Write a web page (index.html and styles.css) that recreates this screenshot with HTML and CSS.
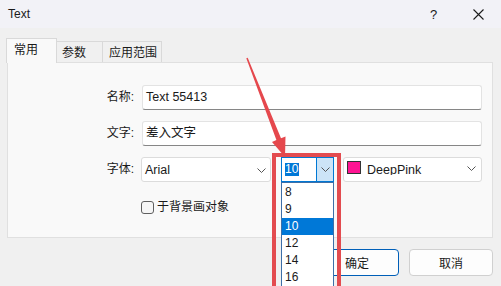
FILE: index.html
```html
<!DOCTYPE html>
<html>
<head>
<meta charset="utf-8">
<title>Text</title>
<link rel="stylesheet" href="styles.css">
</head>
<body>
<div class="window">
  <div class="titlebar">
    <span class="title">Text</span>
    <span class="help">?</span>
    <span class="close"><svg width="11" height="11" viewBox="0 0 11 11"><path d="M0.5 0.5L10.5 10.5M10.5 0.5L0.5 10.5" stroke="#1b1b1b" stroke-width="1.1" fill="none"/></svg></span>
  </div>
  <div class="client">
    <div class="tabs">
      <div class="tab active t1">常用</div>
      <div class="tab t2">参数</div>
      <div class="tab t3">应用范围</div>
    </div>
    <div class="panel">
      <div class="form">
        <div class="lbl">名称:</div>
        <div class="input">Text 55413</div>
        <div class="lbl">文字:</div>
        <div class="input">差入文字</div>
        <div class="lbl">字体:</div>
        <div class="font-row">
          <div class="select font-sel">
            <span class="sel-text">Arial</span>
            <svg class="chev" width="9" height="5" viewBox="0 0 9 5"><path d="M0.5 0.5L4.5 4.5L8.5 0.5" stroke="#555" stroke-width="1" fill="none"/></svg>
          </div>
          <div class="combo">
            <span class="combo-text"><span class="hl">10</span></span>
            <span class="combo-btn"><svg width="9" height="5" viewBox="0 0 9 5"><path d="M0.5 0.5L4.5 4.5L8.5 0.5" stroke="#555" stroke-width="1" fill="none"/></svg></span>
            <ul class="droplist">
              <li>8</li>
              <li>9</li>
              <li class="cur">10</li>
              <li>12</li>
              <li>14</li>
              <li>16</li>
            </ul>
          </div>
          <div class="select color-sel">
            <span class="swatch"></span>
            <span class="color-name">DeepPink</span>
            <svg class="chev" width="9" height="5" viewBox="0 0 9 5"><path d="M0.5 0.5L4.5 4.5L8.5 0.5" stroke="#555" stroke-width="1" fill="none"/></svg>
          </div>
        </div>
        <div></div>
        <label class="check"><span class="box"></span><span class="check-text">于背景画对象</span></label>
      </div>
    </div>
    <div class="buttons">
      <button class="btn default">确定</button>
      <button class="btn">取消</button>
    </div>
  </div>
  <div class="annot-box"></div>
  <svg class="arrow" width="501" height="286" viewBox="0 0 501 286">
    <path d="M246.3 58.3 L247.7 57.7 L281 138.3 L285.5 136.5 L285 157 L272 141.9 L276.4 140.1 Z" fill="#e5484d"/>
  </svg>
</div>
</body>
</html>
```

FILE: styles.css
```css
* { box-sizing: border-box; }
html, body { margin: 0; padding: 0; }
body {
  width: 501px;
  height: 286px;
  overflow: hidden;
  background: #f0f0f0;
  font-family: "Liberation Sans", "Noto Sans CJK SC", sans-serif;
  font-size: 12px;
  color: #1a1a1a;
}
.window {
  position: relative;
  width: 501px;
  height: 286px;
  overflow: hidden;
  background: #f0f0f0;
}
.titlebar {
  height: 28px;
  background: #f2f2f7;
  display: flex;
  align-items: center;
  padding-left: 8px;
}
.title { font-size: 12px; flex: 1; }
.help { font-size: 13px; width: 8px; margin-right: 35px; }
.close { width: 11px; height: 11px; margin-right: 17px; display: flex; }
.client { padding: 0 8px 0 7px; }
.tabs {
  display: flex;
  align-items: flex-end;
  height: 24px;
  margin-top: 10px;
  position: relative;
  z-index: 2;
}
.tab {
  height: 21px;
  border: 1px solid #d9d9d9;
  border-bottom: none;
  background: #f0f0f0;
  line-height: 20px;
  padding-top: 1px;
  white-space: nowrap;
  font-size: 12px;
}
.tab.active {
  height: 25px;
  margin-bottom: -1px;
  background: #f9f9f9;
  line-height: 22px;
  padding-top: 0;
  margin-left: -1px;
}
.t1 { width: 51px; padding-left: 7px; }
.t2 { width: 46px; padding-left: 5px; border-left: none; }
.t3 { width: 59px; padding-left: 6px; border-left: none; }
.panel {
  height: 176px;
  background: #f9f9f9;
  border: 1px solid #e0e0e0;
  padding-top: 22px;
}
.form {
  display: grid;
  grid-template-columns: 127px 340px;
  column-gap: 7px;
  row-gap: 11px;
  grid-template-rows: 25px 25px 25px auto;
}
.lbl {
  text-align: right;
  line-height: 25px;
  padding-right: 1px;
}
.input {
  height: 25px;
  background: #fff;
  border: 1px solid #e3e3e3;
  border-bottom-color: #868686;
  border-radius: 3px;
  padding-left: 3px;
  line-height: 23px;
  font-size: 12.5px;
}
.font-row {
  display: flex;
  height: 25px;
}
.select {
  height: 25px;
  background: #fff;
  border: 1px solid #dcdcdc;
  border-radius: 3px;
  display: flex;
  align-items: center;
}
.font-sel {
  width: 130px;
  margin-left: -1px;
  padding-left: 3px;
  font-size: 12.5px;
}
.sel-text { flex: 1; }
.font-sel .chev { margin-right: 4px; margin-top: 1px; }
.combo {
  position: relative;
  width: 53px;
  height: 25px;
  margin-left: 10px;
  border: 1px solid #0078d4;
  background: #fff;
  display: flex;
}
.combo-text {
  flex: 1;
  padding-left: 3px;
  padding-top: 4px;
}
.hl {
  display: inline-block;
  background: #0078d7;
  color: #fff;
  height: 13px;
  line-height: 13px;
  padding: 0 1px 0 0;
}
.combo-btn {
  width: 17px;
  background: #cce4f7;
  border-left: 1px solid #0078d4;
  display: flex;
  align-items: center;
  justify-content: center;
}
.droplist {
  position: absolute;
  left: -1px;
  top: 24px;
  width: 53px;
  margin: 0;
  padding: 1px 0 0 0;
  list-style: none;
  background: #fff;
  border: 1px solid #3d6fa8;
  z-index: 5;
}
.droplist li {
  height: 17px;
  line-height: 17px;
  padding-left: 3px;
}
.droplist li.cur { background: #0078d7; color: #fff; }
.color-sel {
  width: 139px;
  margin-left: 9px;
  padding-left: 3px;
}
.swatch {
  width: 14px;
  height: 13px;
  background: #ff1493;
  border: 1px solid #333;
  align-self: flex-start;
  margin-top: 3px;
}
.color-name {
  flex: 1;
  align-self: flex-start;
  margin-left: 6px;
  margin-top: 4px;
  height: 13px;
  line-height: 16px;
  overflow: hidden;
  font-size: 12.5px;
}
.color-sel .chev { margin-right: 5px; margin-top: -3px; }
.check {
  display: flex;
  align-items: center;
  padding-top: 8px;
  margin-left: -1px;
  line-height: 13px;
}
.check-text { line-height: 13px; }
.box {
  width: 13px;
  height: 13px;
  border: 1px solid #5f5f5f;
  border-radius: 3px;
  background: #f6f6f6;
  margin-right: 3px;
}
.buttons {
  display: flex;
  justify-content: flex-end;
  gap: 10px;
  margin-top: 11px;
}
.btn {
  width: 84px;
  height: 27px;
  border: 1px solid #d0d0d0;
  border-radius: 4px;
  background: #fdfdfd;
  font-family: "Liberation Sans", "Noto Sans CJK SC", sans-serif;
  font-size: 12px;
  color: #1a1a1a;
  padding: 0;
}
.btn.default { border-color: #005fb8; }
.annot-box {
  position: absolute;
  left: 272px;
  top: 153px;
  width: 69px;
  height: 140px;
  border: 4px solid #e34b4f;
  z-index: 8;
}
.arrow {
  position: absolute;
  left: 0;
  top: 0;
  z-index: 9;
  pointer-events: none;
}
```
